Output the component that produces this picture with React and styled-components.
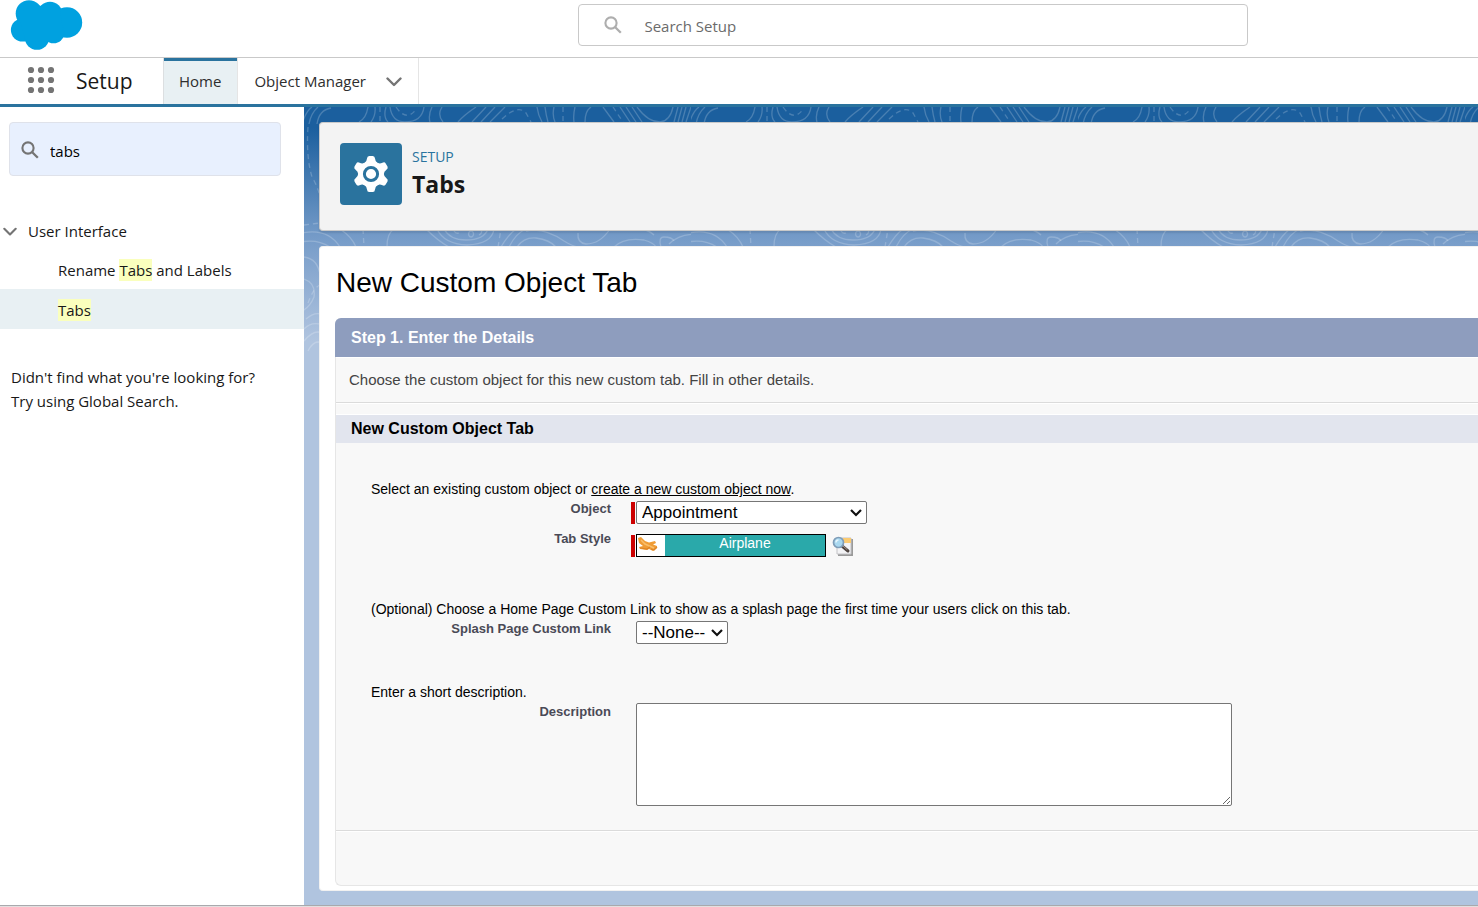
import React from "react";
import styled, { createGlobalStyle } from "styled-components";

const UI = `"Open Sans", "Noto Sans", sans-serif`;
const CLASSIC = `"Liberation Sans", Arial, sans-serif`;

const GlobalStyle = createGlobalStyle`
  *, *::before, *::after { box-sizing: border-box; }
  body { margin: 0; background: #fff; font-family: ${UI}; color: #181818; overflow-x: hidden; }
  h1, h2, h3, p, ul { margin: 0; padding: 0; font-weight: inherit; }
  button { font: inherit; border: 0; padding: 0; background: none; cursor: pointer; }
`;

const Page = styled.div`
  min-height: 100vh;
  display: flex;
  flex-direction: column;
  border-bottom: 1px solid #e3e0e0;
`;

const TopBar = styled.header`
  height: 58px;
  display: flex;
  align-items: flex-start;
  border-bottom: 1px solid #c9c9c9;
`;

const LogoLink = styled.a`
  flex: 0 0 39%;
  padding-left: 10px;
  svg { display: block; }
`;

const GlobalSearch = styled.label`
  display: flex;
  align-items: center;
  gap: 22px;
  width: 670px;
  height: 42px;
  margin: 4px 0 0 2px;
  padding: 0 25px;
  border: 1px solid #c9c9c9;
  border-radius: 4px;
`;

const SearchInput = styled.input`
  flex: 1;
  min-width: 0;
  border: 0;
  outline: 0;
  padding: 2px 0 0;
  background: transparent;
  color: #000;
  font: 15px/24px ${UI};
  &::placeholder { color: #6b6b6b; opacity: 1; }
`;

const NavBar = styled.nav`
  height: 49px;
  display: flex;
  border-bottom: 3px solid #2a739e;
`;

const Launcher = styled.button`
  width: 28px;
  margin: 0 21px 0 27px;
  svg { display: block; }
`;

const AppName = styled.span`
  width: 87px;
  font-size: 21px;
  line-height: 46px;
`;

const NavTab = styled.a`
  display: flex;
  align-items: center;
  gap: 20px;
  padding: 0 16px 0 15px;
  border-left: 1px solid ${(p) => (p.$active ? "#dcdfe1" : "transparent")};
  border-right: 1px solid #e5e5e5;
  box-shadow: ${(p) => (p.$active ? "inset 0 3px 0 #2a739e" : "none")};
  background: ${(p) => (p.$active ? "#e8f0f3" : "#fff")};
  color: #2e2e2e;
  font-size: 15px;
  text-decoration: none;
`;

const Body = styled.div`
  flex: 1;
  display: flex;
  border-bottom: 1px solid #a9a9ad;
`;

const Sidebar = styled.aside`
  flex: 0 0 304px;
  background: #fff;
`;

const QuickFind = styled.label`
  display: flex;
  align-items: center;
  gap: 11px;
  height: 54px;
  margin: 15px 23px 0 9px;
  padding: 2px 11px 0;
  border: 1px solid #dfe2ea;
  border-radius: 4px;
  background: #e8f0fe;
`;

const Tree = styled.ul`
  margin-top: 37px;
  list-style: none;
`;

const TreeToggle = styled.button`
  display: flex;
  align-items: center;
  gap: 11px;
  width: 100%;
  height: 36px;
  padding-left: 3px;
  color: #181818;
  font-size: 15px;
  line-height: 22px;
`;

const TreeLink = styled.a`
  display: flex;
  align-items: center;
  height: 40px;
  padding: 2px 0 0 58px;
  background: ${(p) => (p.$selected ? "#e8f0f3" : "transparent")};
  color: #181818;
  font-size: 15px;
  line-height: 22px;
  text-decoration: none;
`;

const Mark = styled.mark`
  background: #faffbd;
  color: inherit;
  display: inline-block;
`;

const Hint = styled.p`
  padding: 36px 11px 0;
  font-size: 15px;
  line-height: 24px;
`;

const Main = styled.main`
  position: relative;
  flex: 1;
  min-width: 0;
  display: flex;
  flex-direction: column;
  gap: 15px;
  padding: 15px 0 14px 15px;
  background: #b0c4df;
`;

const Backdrop = styled.svg`
  position: absolute;
  inset: 0;
  width: 100%;
  height: 260px;
`;

const PageHeader = styled.section`
  position: relative;
  display: flex;
  gap: 10px;
  height: 109px;
  padding: 20px;
  border: 1px solid #c9c9c9;
  border-right: 0;
  border-radius: 4px 0 0 4px;
  background: #f3f3f3;
  box-shadow: 0 2px 2px rgba(0, 0, 0, 0.1);
`;

const GearTile = styled.span`
  display: flex;
  align-items: center;
  justify-content: center;
  width: 62px;
  height: 62px;
  border-radius: 4px;
  background: #2a739e;
`;

const Eyebrow = styled.p`
  padding-top: 4px;
  color: #2a739e;
  font-size: 14px;
  line-height: 20px;
`;

const HeaderTitle = styled.h1`
  font-size: 23px;
  font-weight: 700;
  line-height: 34px;
`;

const Card = styled.section`
  position: relative;
  flex: 1;
  padding: 16px 0 4px 15px;
  border: 1px solid #f1f1f1;
  border-right: 0;
  border-radius: 4px 0 0 4px;
  background: #fff;
  font-family: ${CLASSIC};
  color: #000;
`;

const CardTitle = styled.h2`
  padding-left: 1px;
  font-size: 28px;
  line-height: 40px;
  margin-bottom: 15px;
`;

const Panel = styled.form`
  border: 1px solid #e6e6e6;
  border-top: 0;
  border-right: 0;
  border-radius: 6px 0 0 6px;
  background: #f8f8f8;
`;

const StepTitle = styled.h3`
  margin-left: -1px;
  padding-left: 16px;
  border-radius: 6px 0 0 0;
  background: #8e9dbe;
  color: #fff;
  font-size: 16px;
  font-weight: 700;
  line-height: 39px;
`;

const StepText = styled.p`
  padding-left: 13px;
  border-bottom: 1px solid #dbdbdb;
  box-shadow: inset 0 1px 0 #fff, 0 1px 0 #fff;
  color: #444;
  font-size: 15px;
  line-height: 45px;
`;

const SectionTitle = styled.h3`
  margin-top: 12px;
  padding-left: 15px;
  background: #e2e5ee;
  box-shadow: 0 -1px 0 #fff;
  font-size: 16px;
  font-weight: 700;
  line-height: 28px;
`;

const Fields = styled.div`
  padding: 36px 35px 24px;
`;

const Group = styled.div`
  margin-bottom: ${(p) => p.$after || 0}px;
  font-size: 14px;
`;

const Intro = styled.p`
  line-height: 20px;
  a { color: inherit; }
`;

const Row = styled.div`
  display: grid;
  grid-template-columns: 240px minmax(0, 1fr);
  gap: 20px;
  min-height: 30px;
`;

const FieldLabel = styled.label`
  color: #4a4a56;
  font-size: 13px;
  font-weight: 700;
  line-height: 20px;
  text-align: right;
`;

const Control = styled.div`
  display: flex;
  align-items: flex-start;
  padding-top: ${(p) => p.$top || 2}px;
`;

const Required = styled.span`
  width: 5px;
  height: 22px;
  margin-top: 1px;
  border-left: 4px solid ${(p) => (p.$on ? "#c00" : "transparent")};
`;

const SelectBox = styled.span`
  position: relative;
  display: block;
  width: ${(p) => p.$width}px;
  svg {
    position: absolute;
    right: 5px;
    top: 7px;
    pointer-events: none;
  }
`;

const Select = styled.select`
  appearance: none;
  display: block;
  width: 100%;
  height: 23px;
  padding: 0 5px;
  border: 1px solid #767676;
  border-radius: 2px;
  background-color: #fff;
  color: #000;
  font: 17px ${CLASSIC};
`;

const StyleSwatch = styled.span`
  display: flex;
  width: 190px;
  height: 23px;
  border: 1px solid #000;
  background: #fff;
  svg { display: block; flex: none; }
`;

const SwatchName = styled.output`
  flex: 1;
  background: #2aa9aa;
  color: #fff;
  font-size: 14px;
  line-height: 17px;
  text-align: center;
`;

const LookupButton = styled.button`
  margin: 2px 0 0 6px;
  svg { display: block; }
`;

const Description = styled.textarea`
  display: block;
  width: 596px;
  max-width: 100%;
  height: 103px;
  margin-top: -1px;
  border: 1px solid #767676;
  border-radius: 2px;
  background: #fff;
  font: 16px ${CLASSIC};
`;

const PanelFooter = styled.div`
  height: 55px;
  border-top: 1px solid #dbdbdb;
  box-shadow: inset 0 1px 0 #fff;
`;

const SearchGlyph = ({ color, size }) => (
  <svg width={size} height={size} viewBox="0 0 18 18" fill="none" stroke={color} aria-hidden="true">
    <circle cx="7" cy="7" r="5.6" strokeWidth="2.1" />
    <path d="M11 11l5.8 5.8" strokeWidth="2.3" />
  </svg>
);

const Chevron = ({ width }) => (
  <svg width={width} height={width} viewBox="0 0 16 16" fill="none" stroke="#747474" strokeWidth="2.4" strokeLinecap="round" strokeLinejoin="round" aria-hidden="true">
    <path d="M1.500 5.500l6.500 6.500L14.500 5.500" />
  </svg>
);

const SelectArrow = () => (
  <svg width="12" height="9" viewBox="0 0 12 9" fill="none" stroke="#111" strokeWidth="2.2" aria-hidden="true">
    <path d="M1 2l5 5 5-5" />
  </svg>
);

const Cloud = () => (
  <svg width="74" height="50" viewBox="10 0 74 50" fill="#00a1e0" aria-hidden="true">
    <circle cx="29" cy="13.500" r="13.300" />
    <circle cx="50" cy="14" r="12.300" />
    <circle cx="67" cy="22.500" r="15.200" />
    <circle cx="22.500" cy="30" r="11.600" />
    <circle cx="37" cy="37.500" r="12.300" />
    <circle cx="53.500" cy="32.500" r="10.800" />
    <path d="M18 15L34 4L40.500 6L50 4L60 9L64 37L48 42L26 41z" />
  </svg>
);

const Waffle = () => (
  <svg width="28" height="46" viewBox="0 0 28 46" fill="#747474" aria-hidden="true">
    {[12, 22, 32].map((y) => [4, 14, 24].map((x) => <circle key={`${x}-${y}`} cx={x} cy={y} r="3.100" />))}
  </svg>
);

const teeth = [0, 60, 120, 180, 240, 300];
const Gear = () => (
  <svg width="40" height="42" viewBox="-20 -21 40 42" aria-hidden="true">
    <g fill="#fff">
      <circle r="13" />
      {teeth.map((a) => (
        <path key={a} transform={`rotate(${a})`} d="M-6.500 -11Q-4.200 -12.500 -4 -15.500Q-3.800 -18 -1.800 -18H1.800Q3.800 -18 4 -15.500Q4.200 -12.500 6.500 -11z" />
      ))}
    </g>
    <circle r="6.600" fill="#fff" stroke="#2a739e" strokeWidth="3" />
  </svg>
);

const Plane = () => (
  <svg width="28" height="21" viewBox="0 0 28 21" aria-hidden="true">
    <path d="M1 3L4 2L8 6L12 7.500L18 6L19 8L16 9.500L20 11V13L16 16L12 14L10 15L3 14L2 12L6 11L2 8z" fill="#ef9c35" />
    <path d="M4 5l4 4 9 4" fill="none" stroke="#f9be6a" strokeWidth="1.500" />
    <path d="M3 13l7 1 3-2M14 14l3 1 3-3" fill="none" stroke="#dd8426" strokeWidth="1.200" />
  </svg>
);

const Lookup = () => (
  <svg width="22" height="20" viewBox="0 0 22 20" aria-hidden="true">
    <path d="M6 3h15v17H6z" fill="#9a9a9a" />
    <path d="M5 2h14v16H5z" fill="#f3f3f5" stroke="#c3c3c6" />
    <path d="M11 2h8v5h-8z" fill="#fbcb72" />
    <path d="M10 10l6 5" stroke="#4d4440" strokeWidth="3" strokeLinecap="round" />
    <path d="M11 10l4 3.500" stroke="#a89488" strokeWidth="1" strokeLinecap="round" />
    <circle cx="6.500" cy="6.500" r="5" fill="#a9d8f0" stroke="#7f9db8" strokeWidth="1.700" />
    <path d="M4 6.500q0-2.500 2.500-2.500" fill="none" stroke="#e4f5fd" strokeWidth="1.500" />
  </svg>
);

const contourLines = [
  "M-2 17Q2 4 8 0M5 17Q7 6 14 0M13 17Q15 3 27 1",
  "M55 15Q62 12 64 0M67 15Q72 8 71 0M82 0Q79 10 84 15M86 0Q88 15 101 15Q118 15 120 0",
  "M126 15Q124 8 128 0M139 15Q133 8 138 0",
  "M154 15Q160 8 172 0M168 15L182 0M177 15L191 0M186 15L201 0",
  "M238 15Q234 8 233 0M244 15Q242 8 241 0M251 15Q248 8 250 0M270 15Q269 8 271 0M281 15Q281 4 287 0",
  "M299 0L310 15M316 0L326 15M322 0L332 15M328 0L338 15M333 0Q344 15 356 15Q366 14 369 0",
  "M370 15L374 0M374 15L378 0M378 15L382 0M382 15L387 0",
  "M-10 137Q10 130 26 140M-10 128Q22 118 36 140M36 122Q48 130 52 140M83 140Q83 126 90 122",
  "M122 122Q134 134 145 140M133 122Q140 137 163 138Q188 137 190 122M140 122Q146 133 162 133Q180 133 184 122",
  "M167 124a2.500 3 0 1 0 .1 0M150 124q2 3 5 2M177 122q2 4-2 6",
  "M197 140Q204 128 212 122M205 140Q212 126 222 122M213 140Q220 130 232 131Q246 133 252 140",
  "M222 124Q240 120 260 134Q268 139 274 140M274 126Q273 136 282 137Q296 137 306 122",
  "M310 140Q320 130 340 133Q350 136 352 140M357 140Q354 130 360 130Q368 130 370 134M338 122Q346 124 350 128",
  "M365 137Q380 122 410 130M0 150Q14 152 16 168M0 172Q12 176 10 190Q6 200 -2 204M2 212Q12 204 18 208",
  "M0 222Q8 214 18 218M0 234Q10 222 18 226M4 244Q10 232 18 236",
];

const dashedContours = [
  "M76 0V15M92 0Q103 16 113 1M198 12Q214 -3 222 6L227 15M259 0V15M309 0L319 15",
  "M59 122L60 140M194 140L197 122M4 20Q2 50 8 70Q14 80 16 90M0 118L16 116M4 196Q10 180 16 178",
];

const Contours = () => (
  <Backdrop aria-hidden="true">
    <defs>
      <linearGradient id="sky" x1="0" y1="0" x2="0" y2="1">
        <stop offset="0" stopColor="#1b5f9e" />
        <stop offset="0.08" stopColor="#1b5f9e" />
        <stop offset="0.5" stopColor="#759bc8" />
        <stop offset="0.9" stopColor="#b0c4df" />
        <stop offset="1" stopColor="#b0c4df" />
      </linearGradient>
      <pattern id="contours" width="387" height="260" patternUnits="userSpaceOnUse">
        <g fill="none" stroke="#fff" strokeOpacity="0.2" strokeWidth="1.300">
          {contourLines.map((d) => <path key={d} d={d} />)}
          {dashedContours.map((d) => <path key={d} d={d} strokeDasharray="5 4" />)}
        </g>
      </pattern>
    </defs>
    <rect width="100%" height="260" fill="url(#sky)" />
    <rect width="100%" height="260" fill="url(#contours)" />
  </Backdrop>
);

export default function App() {
  return (
    <Page>
      <GlobalStyle />
      <TopBar>
        <LogoLink href="#" aria-label="Salesforce"><Cloud /></LogoLink>
        <GlobalSearch>
          <SearchGlyph color="#aeaeae" size={18} />
          <SearchInput type="text" placeholder="Search Setup" aria-label="Search Setup" />
        </GlobalSearch>
      </TopBar>
      <NavBar>
        <Launcher type="button" aria-label="App Launcher"><Waffle /></Launcher>
        <AppName>Setup</AppName>
        <NavTab href="#" $active>Home</NavTab>
        <NavTab href="#">Object Manager <Chevron width={16} /></NavTab>
      </NavBar>
      <Body>
        <Sidebar>
          <QuickFind>
            <SearchGlyph color="#747474" size={18} />
            <SearchInput type="text" defaultValue="tabs" aria-label="Quick Find" />
          </QuickFind>
          <Tree>
            <li>
              <TreeToggle type="button" aria-expanded="true"><Chevron width={14} />User Interface</TreeToggle>
            </li>
            <li>
              <TreeLink href="#"><span>Rename <Mark>Tabs</Mark> and Labels</span></TreeLink>
            </li>
            <li>
              <TreeLink href="#" $selected><Mark>Tabs</Mark></TreeLink>
            </li>
          </Tree>
          <Hint>Didn't find what you're looking for?<br />Try using Global Search.</Hint>
        </Sidebar>
        <Main>
          <Contours />
          <PageHeader>
            <GearTile><Gear /></GearTile>
            <div>
              <Eyebrow>SETUP</Eyebrow>
              <HeaderTitle>Tabs</HeaderTitle>
            </div>
          </PageHeader>
          <Card>
            <CardTitle>New Custom Object Tab</CardTitle>
            <Panel>
              <StepTitle>Step 1. Enter the Details</StepTitle>
              <StepText>Choose the custom object for this new custom tab. Fill in other details.</StepText>
              <SectionTitle>New Custom Object Tab</SectionTitle>
              <Fields>
                <Group $after={40}>
                  <Intro>Select an existing custom object or <a href="#">create a new custom object now</a>.</Intro>
                  <Row>
                    <FieldLabel htmlFor="object">Object</FieldLabel>
                    <Control>
                      <Required $on />
                      <SelectBox $width={231}>
                        <Select id="object" defaultValue="Appointment">
                          <option>Appointment</option>
                        </Select>
                        <SelectArrow />
                      </SelectBox>
                    </Control>
                  </Row>
                  <Row>
                    <FieldLabel htmlFor="tab-style">Tab Style</FieldLabel>
                    <Control $top={5}>
                      <Required $on />
                      <StyleSwatch>
                        <Plane />
                        <SwatchName id="tab-style">Airplane</SwatchName>
                      </StyleSwatch>
                      <LookupButton type="button" aria-label="Tab Style Lookup"><Lookup /></LookupButton>
                    </Control>
                  </Row>
                </Group>
                <Group $after={33}>
                  <Intro>(Optional) Choose a Home Page Custom Link to show as a splash page the first time your users click on this tab.</Intro>
                  <Row>
                    <FieldLabel htmlFor="splash">Splash Page Custom Link</FieldLabel>
                    <Control>
                      <Required />
                      <SelectBox $width={92}>
                        <Select id="splash" defaultValue="--None--">
                          <option>--None--</option>
                        </Select>
                        <SelectArrow />
                      </SelectBox>
                    </Control>
                  </Row>
                </Group>
                <Group>
                  <Intro>Enter a short description.</Intro>
                  <Row>
                    <FieldLabel htmlFor="description">Description</FieldLabel>
                    <Control>
                      <Required />
                      <Description id="description" />
                    </Control>
                  </Row>
                </Group>
              </Fields>
              <PanelFooter />
            </Panel>
          </Card>
        </Main>
      </Body>
    </Page>
  );
}
